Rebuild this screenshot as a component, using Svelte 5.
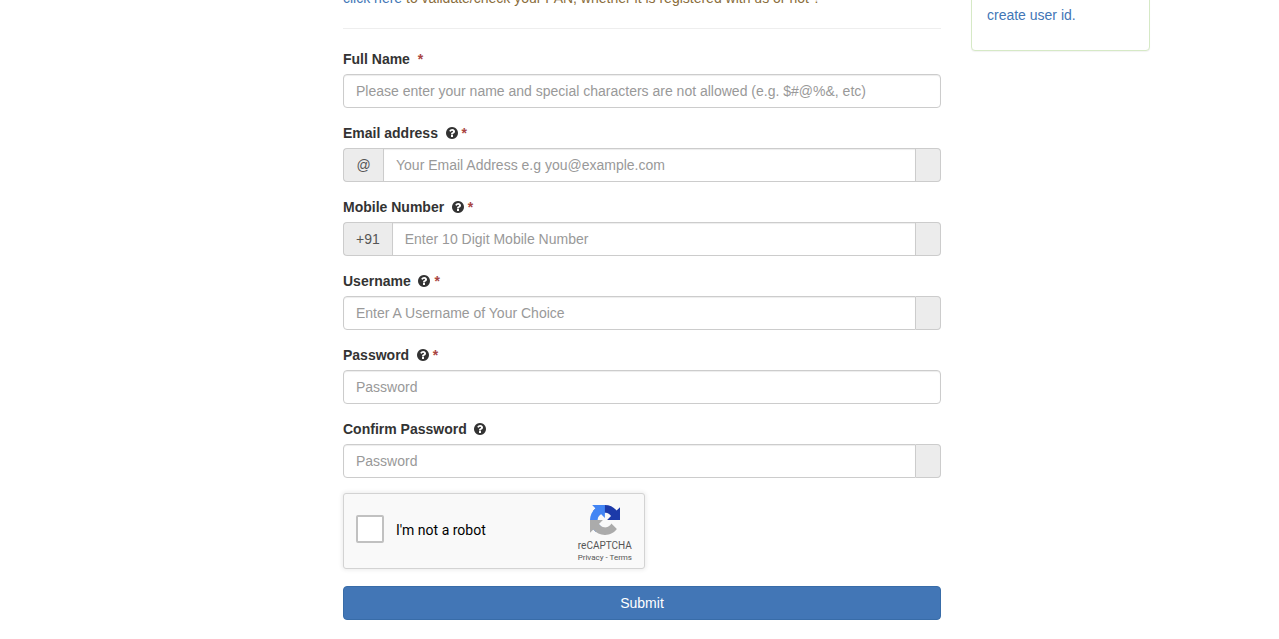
<script>
  let accepted = false;

  let fields = [
    { id: "fullname", label: "Full Name", type: "text", placeholder: "Please enter your name and special characters are not allowed (e.g. $#@%&, etc)", help: false, required: true, value: "" },
    { id: "email", label: "Email address", type: "email", placeholder: "Your Email Address e.g you@example.com", prefix: "@", status: true, help: true, required: true, value: "" },
    { id: "mobile", label: "Mobile Number", type: "tel", placeholder: "Enter 10 Digit Mobile Number", prefix: "+91", status: true, help: true, required: true, value: "" },
    { id: "username", label: "Username", type: "text", placeholder: "Enter A Username of Your Choice", status: true, help: true, required: true, value: "" },
    { id: "password", label: "Password", type: "password", placeholder: "Password", help: true, required: true, value: "" },
    { id: "confirm", label: "Confirm Password", type: "password", placeholder: "Password", status: true, help: true, required: false, value: "" }
  ];

  function handleInput(event, field) {
    field.value = event.target.value;
    fields = fields;
  }

  function handleSubmit(event) {
    event.preventDefault();
  }
</script>

<div class="page">
  <main>
    <p class="notice">
      <a href="#validate">click here</a> to validate/check your PAN, whether it is registered with us or not ?
    </p>
    <hr />

    <form on:submit={handleSubmit}>
      {#each fields as field (field.id)}
        <div class="form-group">
          <label for={field.id}>
            {field.label}&nbsp;
            {#if field.help}
              <svg class="help" viewBox="128 128 1536 1536" aria-hidden="true">
                <path d="M1024 1376v-192q0-14-9-23t-23-9h-192q-14 0-23 9t-9 23v192q0 14 9 23t23 9h192q14 0 23-9t9-23zm256-672q0-88-55.500-163t-138.500-116-170-41q-243 0-371 213-15 24 8 42l132 100q7 6 19 6 16 0 25-12 53-68 86-92 34-24 86-24 48 0 85.500 26t37.500 59q0 38-20 61t-68 45q-63 28-115.500 86.500t-52.500 125.500v36q0 14 9 23t23 9h192q14 0 23-9t9-23q0-19 21.500-49.500t54.500-49.500q32-18 49-28.500t46-35 44.500-48 28-60.500 12.500-81zm384 192q0 209-103 385.500t-279.500 279.500-385.500 103-385.500-103-279.500-279.500-103-385.500 103-385.500 279.500-279.500 385.500-103 385.500 103 279.500 279.500 103 385.500z" />
              </svg>
            {/if}
            {#if field.required}
              <span class="required">*</span>
            {/if}
          </label>
          <div class="input-group">
            {#if field.prefix}
              <span class="addon prefix">{field.prefix}</span>
            {/if}
            <input
              id={field.id}
              class:after-prefix={field.prefix}
              class:before-status={field.status}
              type={field.type}
              placeholder={field.placeholder}
              value={field.value}
              on:input={(event) => handleInput(event, field)}
            />
            {#if field.status}
              <span class="addon status"></span>
            {/if}
          </div>
        </div>
      {/each}

      <div class="captcha">
        <input id="robot" type="checkbox" bind:checked={accepted} />
        <label for="robot">I'm not a robot</label>
        <div class="brand">
          <svg viewBox="0 0 64 64" aria-hidden="true">
            <path fill="#1c3aa9" d="M64 31.955l-.013-1.370V4.687l-7.160 7.160C50.967 4.674 42.050.093 32.063.093c-10.390 0-19.622 4.960-25.400 12.642l11.736 11.860a15.550 15.550 0 0 1 4.754-5.334c2.050-1.600 4.952-2.906 8.910-2.906.478 0 .847.056 1.118.161 4.904.387 9.154 3.093 11.657 7.020l-8.307 8.307L64 31.955" />
            <path fill="#4285f4" d="M31.862.094l-1.370.013H4.594l7.160 7.160C4.580 13.127 0 22.044 0 32.030c0 10.390 4.960 19.622 12.642 25.400l11.860-11.736a15.550 15.550 0 0 1-5.334-4.754c-1.600-2.050-2.906-4.952-2.906-8.910 0-.478.056-.847.161-1.118.387-4.904 3.093-9.154 7.020-11.657l8.307 8.307L31.862.094" />
            <path fill="#ababab" d="M.001 32.140l.013 1.368v25.900l7.160-7.160c5.860 7.173 14.777 11.754 24.764 11.754 10.390 0 19.622-4.960 25.400-12.642L45.602 39.500a15.550 15.550 0 0 1-4.754 5.334c-2.050 1.600-4.952 2.906-8.910 2.906-.478 0-.847-.056-1.118-.161-4.904-.387-9.154-3.093-11.657-7.020l8.307-8.307L.001 32.140" />
          </svg>
          <span class="name">reCAPTCHA</span>
          <span class="links"><a href="#privacy">Privacy</a> - <a href="#terms">Terms</a></span>
        </div>
      </div>

      <button type="submit">Submit</button>
    </form>
  </main>

  <aside>
    <div class="panel">
      <a href="#create">create user id.</a>
    </div>
  </aside>
</div>

<style>
  :global(body) {
    background: #fff;
  }

  .page,
  .page * {
    box-sizing: border-box;
  }

  /* the page is scrolled part way past the notice */
  .page {
    display: grid;
    grid-template-columns: 3fr 6fr 2fr 1fr;
    margin-top: -12px;
    padding: 0 9px 19px 14px;
    font-family: "Helvetica Neue", "Liberation Sans", Arial, sans-serif;
    font-size: 14px;
    line-height: 20px;
    color: #333;
  }

  main {
    grid-column: 2;
    min-width: 0;
    padding: 0 15px;
  }

  aside {
    grid-column: 3;
    min-width: 0;
    padding: 0 15px;
  }

  a {
    color: #4276b6;
    text-decoration: none;
  }

  .notice {
    margin: 0;
    color: #8a6d3b;
  }

  hr {
    margin: 20px 0;
    border: 0;
    border-top: 1px solid #eee;
  }

  .form-group {
    margin-bottom: 15px;
  }

  .form-group label {
    display: block;
    margin-bottom: 5px;
    font-weight: bold;
  }

  .help {
    width: 12px;
    height: 12px;
    fill: #333;
    vertical-align: -1px;
  }

  .required {
    color: #a94442;
  }

  .input-group {
    display: flex;
    height: 34px;
  }

  .input-group input {
    flex: 1;
    min-width: 0;
    padding: 6px 12px;
    border: 1px solid #ccc;
    border-radius: 4px;
    background: #fff;
    box-shadow: inset 0 1px 1px rgba(0, 0, 0, 0.075);
    color: #555;
    font: inherit;
  }

  .input-group input::placeholder {
    color: #999;
    opacity: 1;
  }

  .input-group input.after-prefix {
    border-top-left-radius: 0;
    border-bottom-left-radius: 0;
  }

  .input-group input.before-status {
    border-top-right-radius: 0;
    border-bottom-right-radius: 0;
  }

  .addon {
    padding: 6px 12px;
    border: 1px solid #ccc;
    background: #ececec;
    color: #555;
  }

  .prefix {
    min-width: 40px;
    border-right: 0;
    border-radius: 4px 0 0 4px;
    text-align: center;
  }

  .status {
    border-left: 0;
    border-radius: 0 4px 4px 0;
  }

  .captcha {
    display: flex;
    align-items: center;
    width: 302px;
    max-width: 100%;
    height: 76px;
    margin-bottom: 17px;
    padding: 0 12px;
    border: 1px solid #d3d3d3;
    border-radius: 3px;
    background: #f9f9f9;
    box-shadow: 0 0 4px 1px rgba(0, 0, 0, 0.08);
    color: #000;
    font-family: Roboto, sans-serif;
  }

  .captcha input {
    appearance: none;
    width: 28px;
    height: 28px;
    margin: 0 12px 4px 0;
    border: 2px solid #c1c1c1;
    border-radius: 2px;
    background: #fff;
  }

  .captcha input:checked {
    background: #4285f4;
  }

  .captcha label {
    margin-bottom: 2px;
  }

  .brand {
    display: flex;
    flex-direction: column;
    align-items: center;
    margin-left: auto;
    padding-top: 6px;
    color: #555;
    line-height: 12px;
    white-space: nowrap;
  }

  .brand svg {
    width: 30px;
    height: 30px;
    margin: 1px 0 5px;
  }

  .name {
    font-size: 10px;
  }

  .links {
    font-size: 8px;
  }

  .links a {
    color: #555;
  }

  button {
    display: block;
    width: 100%;
    padding: 6px 12px;
    border: 1px solid #386ca8;
    border-radius: 4px;
    background: #4276b6;
    color: #fff;
    font: inherit;
    cursor: pointer;
  }

  .panel {
    padding: 16px 15px 25px;
    border: 1px solid #d6e9c6;
    border-radius: 4px;
    background: #fff;
    box-shadow: 0 1px 1px rgba(0, 0, 0, 0.05);
  }
</style>
